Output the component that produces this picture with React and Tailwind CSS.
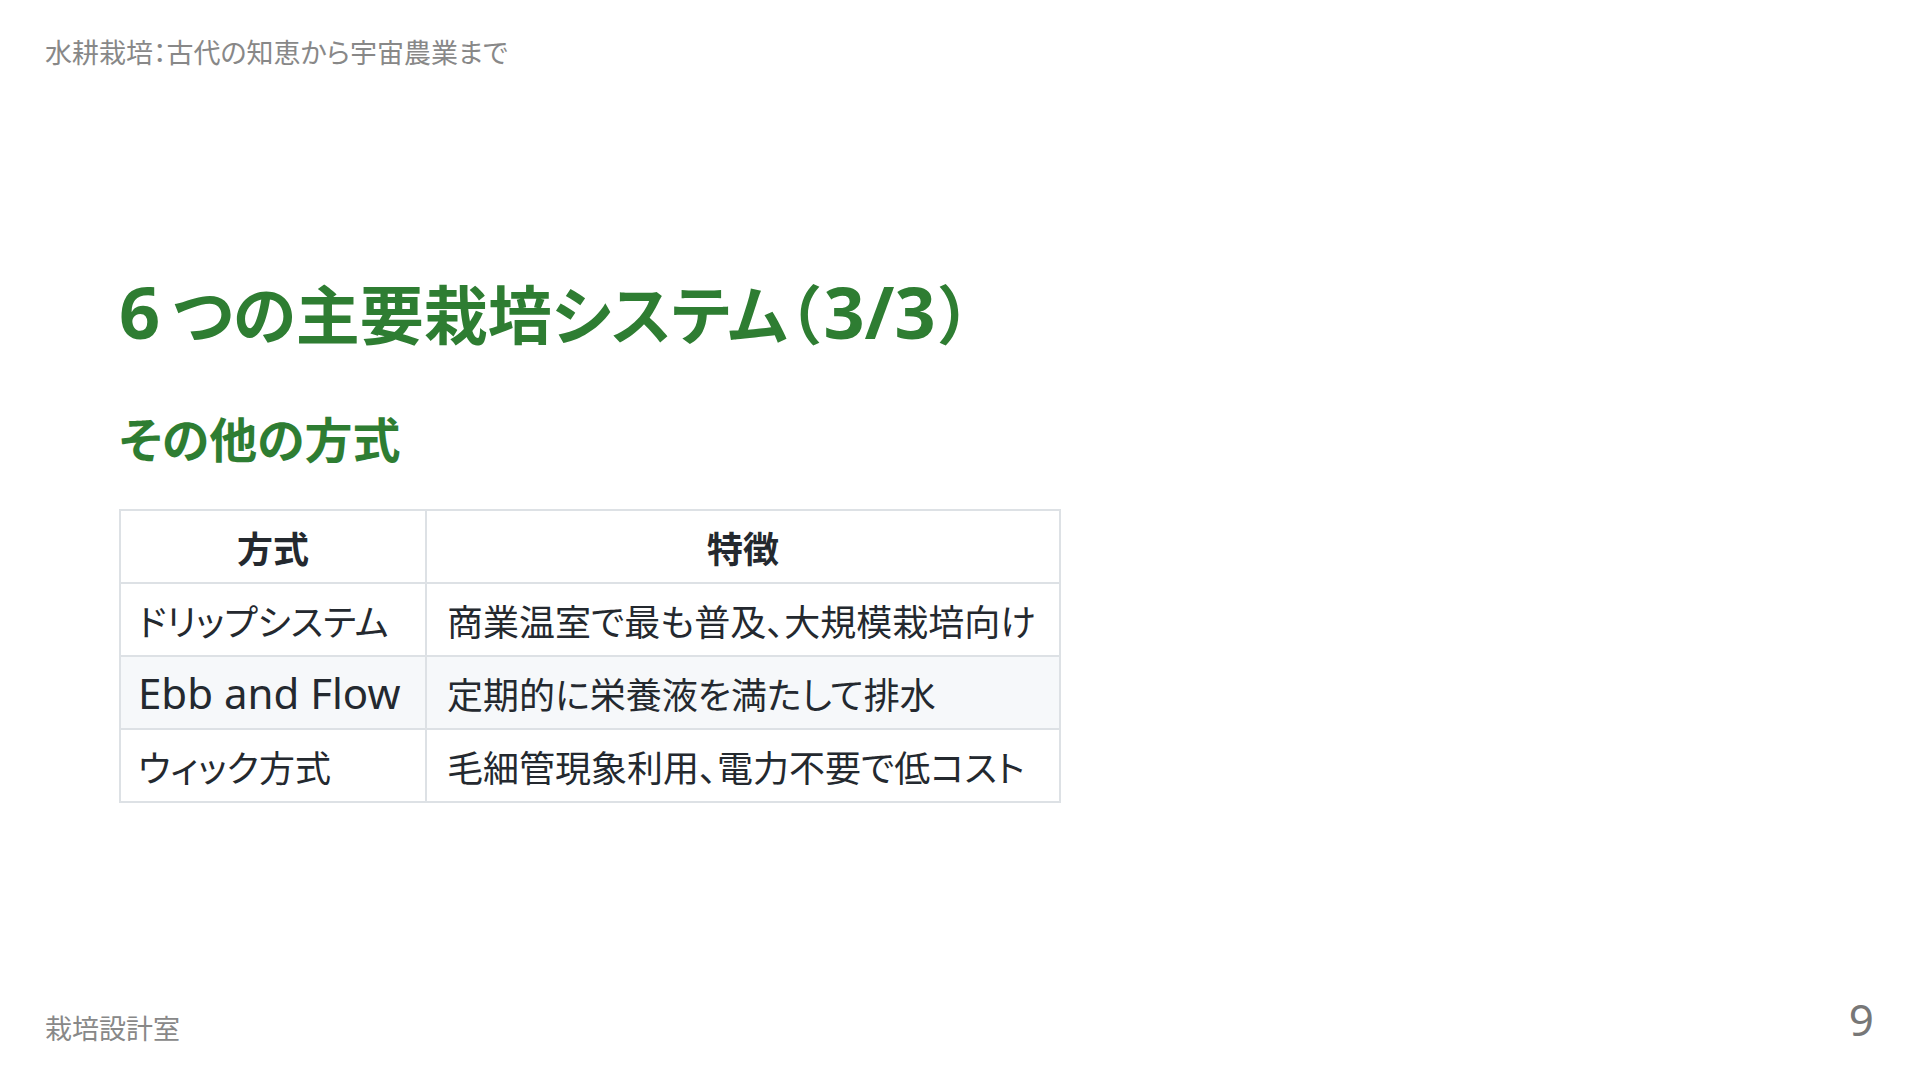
import React from "react";

const cjk = '"Noto Sans CJK JP", sans-serif';
const latin = '"Noto Sans", "Noto Sans CJK JP", sans-serif';

const rows = [
  { method: "ドリップシステム", feature: "商業温室で最も普及、大規模栽培向け" },
  { method: "Ebb and Flow", feature: "定期的に栄養液を満たして排水", latin: true },
  { method: "ウィック方式", feature: "毛細管現象利用、電力不要で低コスト" },
];

export default function App() {
  return (
    <div
      className="w-[1920px] h-[1080px] bg-white flex flex-col overflow-hidden [font-feature-settings:'palt']"
      style={{ fontFamily: cjk }}
    >
      {/* header */}
      <div className="pl-[45px] pt-[36px] text-[27px] leading-[32px] text-[#888888]">
        水耕栽培：古代の知恵から宇宙農業まで
      </div>

      {/* content */}
      <div className="pl-[119px] pt-[207px] flex flex-col">
        <h1 className="h-[72px] flex items-center text-[64px] font-bold text-[#2e7d32] whitespace-nowrap">
          <span className="text-[72px] mr-[12px]" style={{ fontFamily: latin }}>6</span>
          つの主要栽培システム（
          <span className="text-[72px] mx-[4px]" style={{ fontFamily: latin }}>3/3</span>
          ）
        </h1>
        <h2 className="mt-[62px] text-[48px] leading-[56px] font-bold text-[#2e7d32]">
          その他の方式
        </h2>

        <table className="mt-[44px] w-[940px] table-fixed border-collapse text-[36px] text-[#24292f]">
          <thead>
            <tr className="bg-white">
              <th className="w-[306px] border-2 border-[#dde1e5] h-[73px] font-bold text-center">
                方式
              </th>
              <th className="w-[634px] border-2 border-[#dde1e5] h-[73px] font-bold text-center">
                特徴
              </th>
            </tr>
          </thead>
          <tbody>
            {rows.map((row, idx) => (
              <tr key={idx} className={idx === 1 ? "bg-[#f6f8fa]" : "bg-white"}>
                <td className="border-2 border-[#dde1e5] pl-[17px] pr-2 h-[73px] font-normal whitespace-nowrap">
                  {row.latin ? (
                    <span className="text-[42px]" style={{ fontFamily: latin }}>
                      {row.method}
                    </span>
                  ) : (
                    row.method
                  )}
                </td>
                <td className="border-2 border-[#dde1e5] pl-[20px] pr-2 h-[73px] font-normal whitespace-nowrap">
                  {row.feature}
                </td>
              </tr>
            ))}
          </tbody>
        </table>
      </div>

      {/* footer */}
      <div className="mt-auto flex items-end justify-between pl-[45px] pr-[46px] pb-[36px]">
        <div className="text-[27px] leading-[32px] text-[#888888]">栽培設計室</div>
        <div className="text-[44px] leading-[50px] text-[#777777]" style={{ fontFamily: latin }}>
          9
        </div>
      </div>
    </div>
  );
}
